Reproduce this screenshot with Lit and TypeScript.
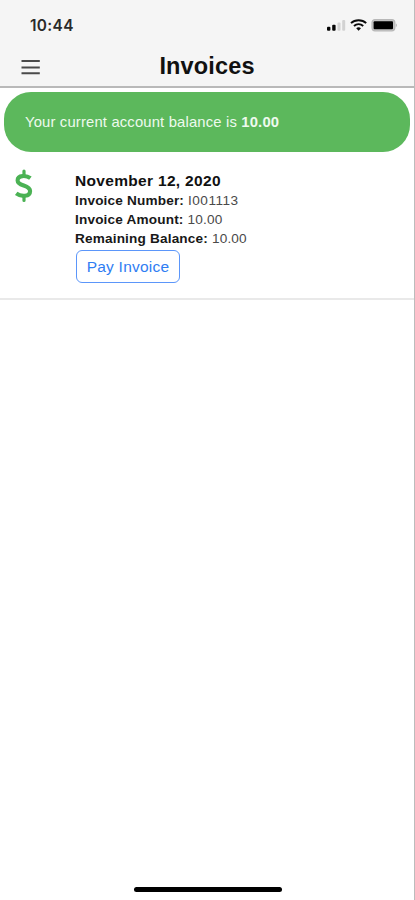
import { LitElement, html, css } from "lit";
import { customElement } from "lit/decorators.js";

@customElement("status-bar")
class StatusBar extends LitElement {
  static styles = css`
    :host { display: flex; height: 48px; padding: 3px 16px 0 30px; align-items: center; justify-content: space-between; box-sizing: border-box; }
    .time { font: 600 15.4px/20px Inter, "Liberation Sans", sans-serif; letter-spacing: 0.35px; color: #2a2a2a; }
    svg { display: block; margin-top: -1px; }
  `;
  render() {
    return html`
      <span class="time">10:44</span>
      <svg width="72" height="14" viewBox="0 0 72 14">
        <rect x="1" y="8.8" width="3.4" height="4" rx="1" fill="#050505" />
        <rect x="6.2" y="6.8" width="3.4" height="6" rx="1" fill="#050505" />
        <rect x="11.5" y="4.5" width="3" height="8.3" rx="1" fill="#d2d2d2" />
        <rect x="16.2" y="2" width="3" height="10.8" rx="1" fill="#d2d2d2" />
        <g fill="none" stroke="#0a0a0a" stroke-width="1.9">
          <path d="M25 5.1C29 1.3 36.2 1.3 40.2 5.1" />
          <path d="M28 8C30.6 5.5 34.6 5.5 37.2 8" />
        </g>
        <path d="M30.2 10.2C31.6 8.9 33.6 8.9 35 10.2L32.6 12.7Z" fill="#0a0a0a" />
        <rect x="46" y="1.6" width="22.8" height="11.2" rx="3" fill="#c4c4c4" stroke="#b8b8b8" stroke-width="1.2" />
        <rect x="47.6" y="3.2" width="19.4" height="8" rx="1" fill="#000" />
        <path d="M69.8 5.2Q72 7.2 69.8 9.3Z" fill="#b4b4b4" />
      </svg>
    `;
  }
}

@customElement("app-root")
class AppRoot extends LitElement {
  static styles = css`
    :host { display: flex; flex-direction: column; box-sizing: border-box; width: 415px; height: 900px; background: #fff; border-right: 1px solid #bcbcbc; font-family: "Liberation Sans", sans-serif; color: #111; overflow: hidden; }
    header { height: 88px; background: #f5f5f5; border-bottom: 2px solid #b9b9b9; box-sizing: border-box; }
    .bar { display: grid; grid-template-columns: 60px 1fr 60px; align-items: center; height: 38px; }
    .menu { display: block; margin-left: 21px; }
    h1 { margin: -2px 0 0; text-align: center; font-size: 23.5px; line-height: 36px; font-weight: 700; letter-spacing: 0.15px; white-space: nowrap; }
    .banner { margin: 4px 4px 0 4px; height: 60px; border-radius: 27px; background: #5cb85c; color: #eefaee; display: flex; align-items: center; padding-left: 21px; box-sizing: border-box; font-size: 14.8px; letter-spacing: 0.17px; white-space: pre; }
    .invoice { display: grid; grid-template-columns: 75px 1fr; height: 148px; border-bottom: 2px solid #e9e9e9; box-sizing: border-box; }
    .dollar { display: block; margin: 17px 0 0 14px; }
    .details { padding-top: 19px; }
    h2 { margin: 0; font-size: 15.5px; line-height: 20px; letter-spacing: 0.32px; }
    .row { font-size: 13.6px; line-height: 19px; letter-spacing: 0.17px; color: #4a4a4a; white-space: nowrap; }
    .row b { color: #181818; }
    .number { letter-spacing: 0.5px; }
    button { display: block; margin: 2px 0 0 1px; width: 104px; height: 33px; padding: 0; border: 1px solid #5b96fa; border-radius: 6px; background: #fff; color: #2f7df3; font: 15.5px "Liberation Sans", sans-serif; letter-spacing: 0.22px; }
    .home { margin: auto 0 8px 134px; width: 148px; height: 5px; border-radius: 3px; background: #000; }
  `;
  render() {
    return html`
      <header>
        <status-bar></status-bar>
        <div class="bar">
          <svg class="menu" width="20" height="18" viewBox="0 0 20 18">
            <path d="M0.5 3H18.8M0.5 9.4H18.8M0.5 15.3H18.8" stroke="#4a4a4a" stroke-width="2" />
          </svg>
          <h1>Invoices</h1>
        </div>
      </header>
      <div class="banner"><span>Your current account balance is <b>10.00</b></span></div>
      <section class="invoice">
        <svg class="dollar" width="20" height="34" viewBox="0 0 20 34" fill="none" stroke="#4bb254">
          <path d="M10 2V6.5M10 27.5V31.5" stroke-width="3.2" stroke-linecap="round" />
          <path d="M16.4 9.2C12.5 6.2 3.6 5.9 3.6 11.4C3.6 17.6 16.1 15.4 16.1 22C16.1 28 7 28 2.2 24.4" stroke-width="4.1" />
        </svg>
        <div class="details">
          <h2>November 12, 2020</h2>
          <div class="row"><b>Invoice Number:</b> <span class="number">I001113</span></div>
          <div class="row"><b>Invoice Amount:</b> 10.00</div>
          <div class="row"><b>Remaining Balance:</b> 10.00</div>
          <button>Pay Invoice</button>
        </div>
      </section>
      <div class="home"></div>
    `;
  }
}
